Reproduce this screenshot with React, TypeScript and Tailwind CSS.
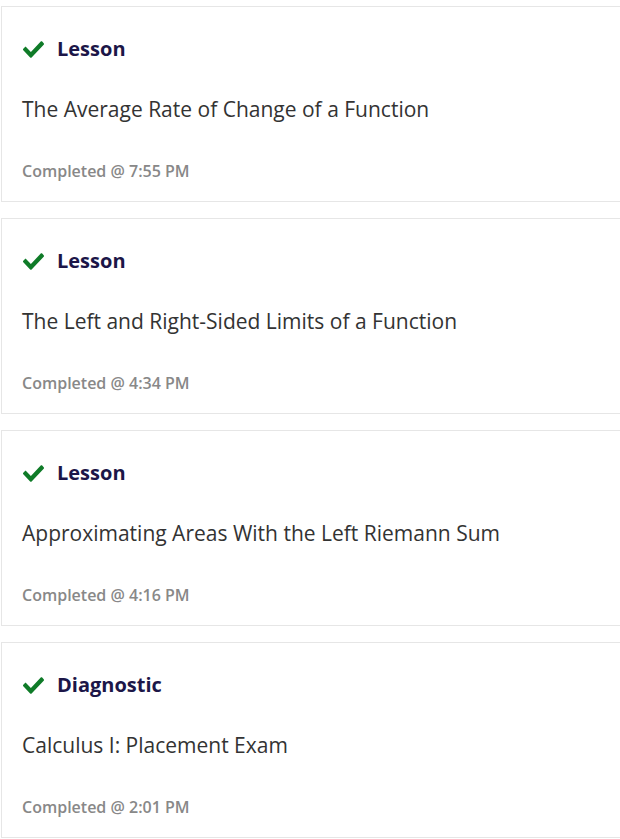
import React from 'react';

interface Activity {
  kind: string;
  title: string;
  time: string;
}

const ACTIVITIES: Activity[] = [
  { kind: 'Lesson', title: 'The Average Rate of Change of a Function', time: '7:55 PM' },
  { kind: 'Lesson', title: 'The Left and Right-Sided Limits of a Function', time: '4:34 PM' },
  { kind: 'Lesson', title: 'Approximating Areas With the Left Riemann Sum', time: '4:16 PM' },
  { kind: 'Diagnostic', title: 'Calculus I: Placement Exam', time: '2:01 PM' },
];

// check mark drawn like the font-awesome one
const CheckIcon = () => (
  <svg viewBox="0 60 512 390" preserveAspectRatio="none" className="ml-[1px] w-[21px] h-[17px] shrink-0" fill="#0f7b28">
    <path d="M173.898 439.404l-166.4-166.4c-9.997-9.997-9.997-26.206 0-36.204l36.203-36.204c9.997-9.998 26.207-9.998 36.204 0L192 312.69 432.095 72.596c9.997-9.997 26.207-9.997 36.204 0l36.203 36.204c9.997 9.997 9.997 26.206 0 36.204l-294.4 294.401c-9.998 9.997-26.207 9.997-36.204-.001z" />
  </svg>
);

export default function App() {
  return (
    <div className="w-[620px] h-[839px] overflow-hidden bg-white pt-[6px] flex flex-col gap-[16px] font-['Open_Sans',sans-serif]">
      {ACTIVITIES.map((a, i) => (
        <div key={i} className="ml-[1px] w-[640px] h-[196px] shrink-0 border border-[#e6e6e6] bg-white pl-[20px] pt-[30px] flex flex-col">
          <div className="flex items-center gap-[13px] h-[24px]">
            <CheckIcon />
            <span className="text-[20px] leading-[24px] font-bold text-[#1c1648]">{a.kind}</span>
          </div>
          <div className="mt-[35px] text-[21px] leading-[26px] text-[#333333]">{a.title}</div>
          <div className="mt-[39px] text-[16px] leading-[20px] font-semibold text-[#888888]">Completed @ {a.time}</div>
        </div>
      ))}
    </div>
  );
}
